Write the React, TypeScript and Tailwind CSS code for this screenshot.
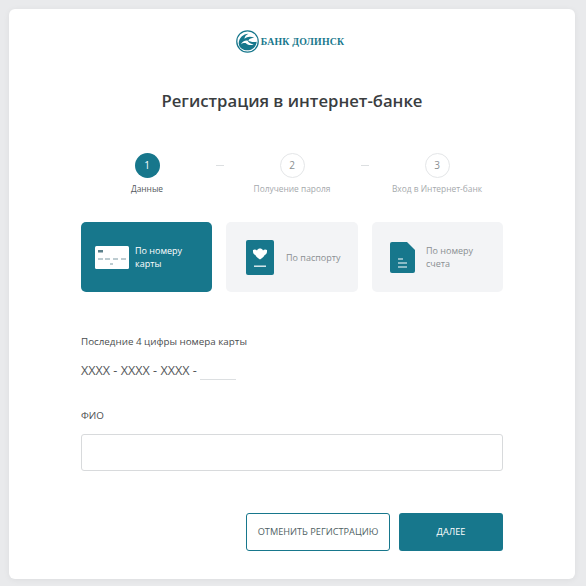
const font = "font-['Open_Sans',sans-serif]";

const steps = [
  { n: '1', label: 'Данные', active: true },
  { n: '2', label: 'Получение пароля', active: false },
  { n: '3', label: 'Вход в Интернет-банк', active: false },
];

function Logo() {
  return (
    <div className="flex items-center justify-center gap-[2px] pr-[4px]">
      <svg width="23" height="23" viewBox="0 0 24 24">
        <circle cx="12" cy="12" r="11.200" fill="#fff" stroke="#17778c" strokeWidth="1.300" />
        <path d="M2.800 14C3 8.500 7.500 4 13 4c-2.500 1.200-4 3-4.200 5 2.800-2.400 7-2.800 10.200-.8-2.800 0-5 1-6.200 2.800 2 1.500 5.500 2 8.800 1.200C21.200 17.500 17 21.200 12 21.200 7.200 21.200 3.200 18.500 2.800 14Z" fill="#17778c" />
        <path d="M5 15c1.500-3 4.500-4.500 7-4 1 2.500 4 4 6.500 4-3 1.500-7 .5-8.500-1.500-2-.2-3.500.3-5 1.500Z" fill="#fff" />
      </svg>
      <span className="font-['Liberation_Serif',serif] font-bold text-[9.800px] tracking-[0.2px] text-[#17778c] leading-none">БАНК ДОЛИНСК</span>
    </div>
  );
}

function Stepper() {
  return (
    <div className="flex justify-center mt-[41px] -mx-[10px]">
      {steps.map((s, i) => (
        <div key={s.n} className="flex">
          <div className="flex flex-col items-center w-[145px]">
            <div className={s.active
              ? 'w-[25px] h-[25px] rounded-full bg-[#17778c] text-white flex items-center justify-center text-[10px]'
              : 'w-[25px] h-[25px] rounded-full border border-[#e4e6e8] text-[#8a8f92] flex items-center justify-center text-[10px]'}>
              {s.n}
            </div>
            <div className={s.active ? 'mt-[5px] text-[8.400px] leading-[11px] text-[#55595c]' : 'mt-[5px] text-[8.400px] leading-[11px] text-[#a5a9ac]'}>
              {s.label}
            </div>
          </div>
          {i < 2 && <div className="w-[8px] h-px bg-[#dcdfe1] mt-[12px] -mx-[4px]" />}
        </div>
      ))}
    </div>
  );
}

function CardIcon() {
  return (
    <svg width="34" height="23" viewBox="0 0 34 23">
      <rect width="34" height="23" rx="1.500" fill="#fff" />
      <rect x="3" y="4" width="5" height="2.500" fill="#5a7f8a" />
      <path d="M3 13h5M10 13h5M18 13h5M26 13h5M15 18h3" stroke="#7a98a2" strokeWidth="1" />
    </svg>
  );
}

function PassportIcon() {
  return (
    <svg width="28" height="35" viewBox="0 0 28 35">
      <rect width="28" height="35" rx="2" fill="#17778c" />
      <path d="M7 10c1.500-1 3-.6 4 .4.500-1.400 1.800-2 3-2s2.500.6 3 2c1-1 2.500-1.400 4-.4.300 2.500-.6 4.400-2.500 5.200-.8 1.600-2.500 3-4.500 4.300-2-1.300-3.700-2.700-4.500-4.300C7.600 14.400 6.700 12.500 7 10Z" fill="#fff" />
      <rect x="8" y="25.500" width="12" height="1.400" fill="#e6f0f2" />
    </svg>
  );
}

function DocIcon() {
  return (
    <svg width="25" height="31" viewBox="0 0 25 31">
      <path d="M2 0h15l8 8v21a2 2 0 0 1-2 2H2a2 2 0 0 1-2-2V2a2 2 0 0 1 2-2Z" fill="#17778c" />
      <path d="M8 17h5M8 21h9M8 25h9" stroke="#fff" strokeWidth="1.200" />
    </svg>
  );
}

export default function App() {
  return (
    <div className={`w-[586px] h-[586px] bg-[#e9eaec] pt-[9px] pl-[9px] ${font}`}>
      <div className="w-[566px] h-[570px] bg-white rounded-[6px] shadow-[0_1px_6px_rgba(0,0,0,0.06)] pt-[21px] px-[72px] flex flex-col">
        <Logo />
        <h1 className="mt-[37px] text-center text-[16.700px] leading-[22px] font-semibold text-[#3a3d3f]">Регистрация в интернет-банке</h1>
        <Stepper />

        <div className="flex gap-[14px] mt-[28px]">
          <div className="w-[131px] h-[70px] rounded-[5px] bg-[#17778c] text-white flex items-center pl-[14px] gap-[6px]">
            <CardIcon />
            <span className="text-[9px] leading-[13px] w-[60px]">По номеру карты</span>
          </div>
          <div className="w-[132px] h-[70px] rounded-[5px] bg-[#f3f4f6] flex items-center pl-[20px] gap-[12px] text-[#8a8f92]">
            <PassportIcon />
            <span className="text-[9px] leading-[13px]">По паспорту</span>
          </div>
          <div className="w-[131px] h-[70px] rounded-[5px] bg-[#f3f4f6] flex items-center pl-[18px] gap-[11px] text-[#8a8f92]">
            <DocIcon />
            <span className="text-[9px] leading-[13px] w-[60px]">По номеру счета</span>
          </div>
        </div>

        <div className="mt-[44px] text-[9.800px] leading-[12px] text-[#4a4d4f]">Последние 4 цифры номера карты</div>
        <div className="mt-[14px] flex items-end text-[#55585a] text-[12.600px] leading-[18px]">
          <span>XXXX - XXXX - XXXX -</span>
          <span className="ml-[3px] w-[36px] h-[18px] border-b border-[#dcdfe1]" />
        </div>

        <div className="mt-[30px] text-[9.800px] leading-[12px] text-[#4a4d4f]">ФИО</div>
        <div className="mt-[12px] h-[37px] rounded-[3px] border border-[#d8dadc] bg-white" />

        <div className="mt-[42px] flex justify-end gap-[9px]">
          <button className="w-[144px] h-[38px] rounded-[3px] border border-[#17778c] bg-white text-[9.200px] text-[#4f5f64]">ОТМЕНИТЬ РЕГИСТРАЦИЮ</button>
          <button className="w-[104px] h-[38px] rounded-[3px] bg-[#17778c] text-white text-[9.200px]">ДАЛЕЕ</button>
        </div>
      </div>
    </div>
  );
}
